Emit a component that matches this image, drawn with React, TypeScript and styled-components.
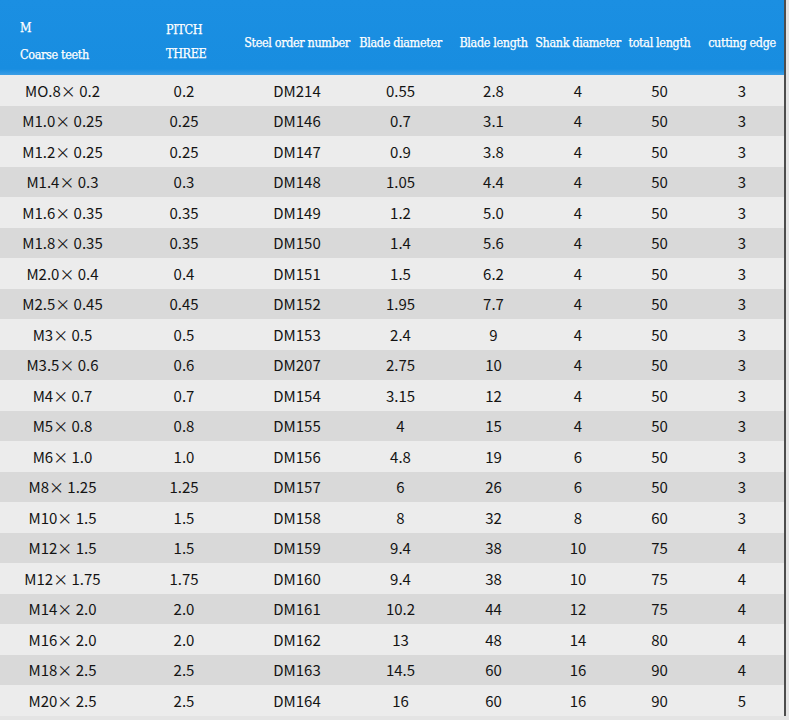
import React from 'react'
import styled, { createGlobalStyle } from 'styled-components'

const GlobalStyle = createGlobalStyle`
  html, body {
    margin: 0;
    padding: 0;
    background: #e4e4e4;
  }
`

const COLS = '125px 118px 108px 99px 87px 82px 81px 84px'

const WTable = styled.div`
  width: 784px;
  border-right: 2px solid #4d4d4d;
  background: #e9e9e9;
  font-family: 'Noto Sans CJK SC', 'Noto Sans', sans-serif;
`

const HeadRow = styled.div`
  display: grid;
  grid-template-columns: ${COLS};
  height: 75px;
  background: linear-gradient(180deg, #1b8fe2 0%, #188de0 92%, #3b9ee6 100%);
  color: #fff;
  font-family: 'DejaVu Serif Condensed', 'DejaVu Serif', serif;
  font-stretch: condensed;
  font-size: 12.5px;
  letter-spacing: -0.35px;
  -webkit-text-stroke: 0.25px #fff;
`

const HeadCell = styled.div<{ $left?: number }>`
  display: flex;
  align-items: center;
  justify-content: ${(p) => (p.$left !== undefined ? 'flex-start' : 'center')};
  padding-left: ${(p) => p.$left ?? 0}px;
  padding-top: 9px;
  white-space: nowrap;
  min-width: 0;
`

const Stack = styled.div<{ $gap: number }>`
  display: flex;
  flex-direction: column;
  gap: ${(p) => p.$gap}px;
  margin-top: -2px;
`

const Row = styled.div<{ $dark: boolean }>`
  display: grid;
  grid-template-columns: ${COLS};
  height: 30.5px;
  background: ${(p) => (p.$dark ? '#d9d9d9' : '#ececec')};
  color: #141414;
  font-size: 15px;
`

const Cell = styled.div`
  display: flex;
  align-items: center;
  justify-content: center;
  white-space: nowrap;
  min-width: 0;
`

const rows: string[][] = [
  ['MO.8× 0.2', '0.2', 'DM214', '0.55', '2.8', '4', '50', '3'],
  ['M1.0× 0.25', '0.25', 'DM146', '0.7', '3.1', '4', '50', '3'],
  ['M1.2× 0.25', '0.25', 'DM147', '0.9', '3.8', '4', '50', '3'],
  ['M1.4× 0.3', '0.3', 'DM148', '1.05', '4.4', '4', '50', '3'],
  ['M1.6× 0.35', '0.35', 'DM149', '1.2', '5.0', '4', '50', '3'],
  ['M1.8× 0.35', '0.35', 'DM150', '1.4', '5.6', '4', '50', '3'],
  ['M2.0× 0.4', '0.4', 'DM151', '1.5', '6.2', '4', '50', '3'],
  ['M2.5× 0.45', '0.45', 'DM152', '1.95', '7.7', '4', '50', '3'],
  ['M3× 0.5', '0.5', 'DM153', '2.4', '9', '4', '50', '3'],
  ['M3.5× 0.6', '0.6', 'DM207', '2.75', '10', '4', '50', '3'],
  ['M4× 0.7', '0.7', 'DM154', '3.15', '12', '4', '50', '3'],
  ['M5× 0.8', '0.8', 'DM155', '4', '15', '4', '50', '3'],
  ['M6× 1.0', '1.0', 'DM156', '4.8', '19', '6', '50', '3'],
  ['M8× 1.25', '1.25', 'DM157', '6', '26', '6', '50', '3'],
  ['M10× 1.5', '1.5', 'DM158', '8', '32', '8', '60', '3'],
  ['M12× 1.5', '1.5', 'DM159', '9.4', '38', '10', '75', '4'],
  ['M12× 1.75', '1.75', 'DM160', '9.4', '38', '10', '75', '4'],
  ['M14× 2.0', '2.0', 'DM161', '10.2', '44', '12', '75', '4'],
  ['M16× 2.0', '2.0', 'DM162', '13', '48', '14', '80', '4'],
  ['M18× 2.5', '2.5', 'DM163', '14.5', '60', '16', '90', '4'],
  ['M20× 2.5', '2.5', 'DM164', '16', '60', '16', '90', '5'],
]

const headers = ['Steel order number', 'Blade diameter', 'Blade length', 'Shank diameter', 'total length', 'cutting edge']

const App = () => {
  return (
    <>
      <GlobalStyle />
      <WTable>
        {/* Header */}
        <HeadRow>
          <HeadCell $left={20}>
            <Stack $gap={12}>
              <span>M</span>
              <span>Coarse teeth</span>
            </Stack>
          </HeadCell>
          <HeadCell $left={41}>
            <Stack $gap={9}>
              <span>PITCH</span>
              <span>THREE</span>
            </Stack>
          </HeadCell>
          {headers.map((h) => (
            <HeadCell key={h}>{h}</HeadCell>
          ))}
        </HeadRow>

        {/* Body */}
        {rows.map((r, i) => (
          <Row key={i} $dark={i % 2 === 1}>
            {r.map((c, j) => (
              <Cell key={j}>{c}</Cell>
            ))}
          </Row>
        ))}
      </WTable>
    </>
  )
}

export default App
